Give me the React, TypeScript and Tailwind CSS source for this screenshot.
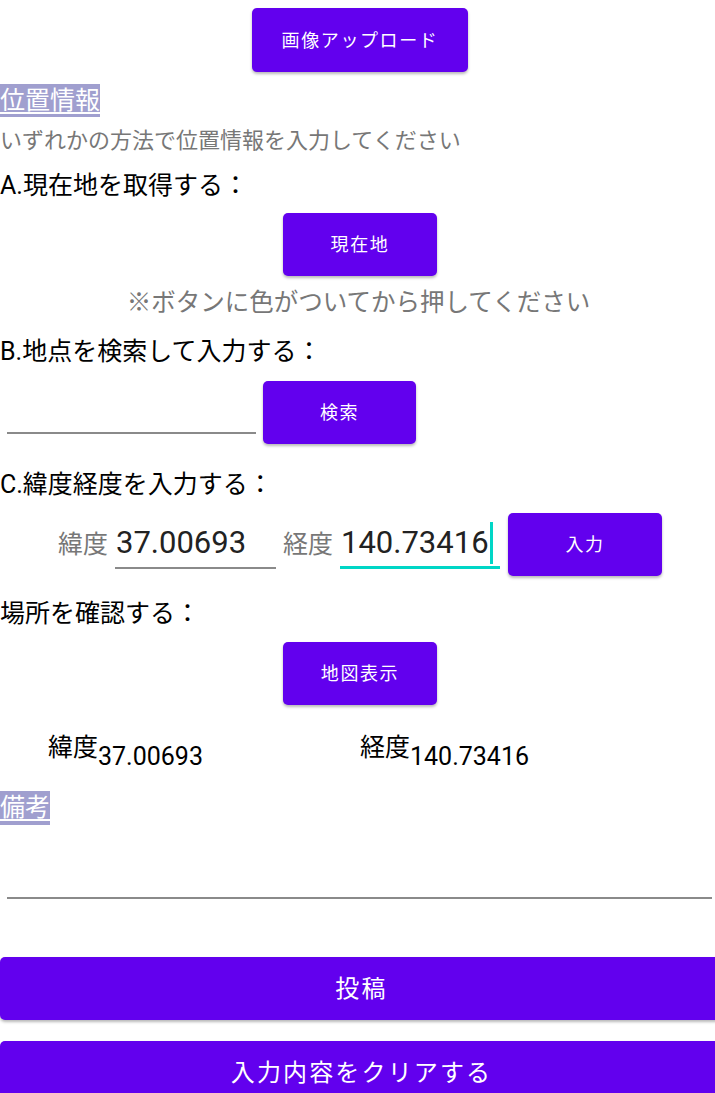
import React from "react";

const FONT = { fontFamily: "Roboto, 'Noto Sans CJK JP', sans-serif" };

function Btn({ label, className }: { label: string; className: string }) {
  return (
    <button
      type="button"
      className={
        "bg-[#6200ee] text-white rounded-[5px] shadow-[0_2px_3px_rgba(0,0,0,0.28)] tracking-[0.0892em] flex items-center justify-center shrink-0 " +
        className
      }
    >
      {label}
    </button>
  );
}

export default function App() {
  return (
    <div className="w-[715px] h-[1093px] overflow-hidden bg-white text-black" style={FONT}>
      <div className="flex pt-[8px] pl-[252px]">
        <Btn label="画像アップロード" className="w-[216px] h-[64px] text-[18px]" />
      </div>

      <div className="mt-[12px]">
        <span className="inline-block bg-[#a09fcf] text-white text-[25px] leading-[33px] h-[33px] underline underline-offset-[3px] decoration-[1.5px]">
          位置情報
        </span>
      </div>

      <p className="mt-[9px] text-[22px] leading-[30px] text-[#777777]">
        いずれかの方法で位置情報を入力してください
      </p>

      <p className="mt-[15px] text-[25px] leading-[30px]">A.現在地を取得する：</p>

      <div className="flex mt-[12px] pl-[283px]">
        <Btn label="現在地" className="w-[154px] h-[63px] text-[18px]" />
      </div>

      <p className="mt-[12px] text-[24.5px] leading-[30px] text-[#777777] text-center pl-[2px]">
        ※ボタンに色がついてから押してください
      </p>

      <p className="mt-[19px] text-[25px] leading-[30px]">B.地点を検索して入力する：</p>

      <div className="flex items-start mt-[14px] pl-[7px] gap-[7px]">
        <div className="w-[249px] h-[53px] border-b-[2px] border-[#8a8a8a]" />
        <Btn label="検索" className="w-[153px] h-[63px] text-[18px]" />
      </div>

      <p className="mt-[26px] text-[25px] leading-[30px]">C.緯度経度を入力する：</p>

      <div className="flex items-center mt-[13px] pl-[58px] h-[63px]">
        <span className="text-[25px] leading-[30px] text-[#777777] w-[57px]">緯度</span>
        <div className="w-[161px] h-[48px] border-b-[2px] border-[#8a8a8a] flex items-center text-[31px] text-[#222222] pl-[1px]">
          37.00693
        </div>
        <span className="text-[25px] leading-[30px] text-[#777777] ml-[7px] w-[57px]">経度</span>
        <div className="w-[160px] h-[48px] border-b-[3px] border-[#00d6c6] flex items-center text-[31px] text-[#222222] pl-[1px]">
          140.73416
          <span className="inline-block w-[3px] h-[42px] bg-[#00d6c6] ml-[1px]" />
        </div>
        <Btn label="入力" className="ml-[8px] w-[154px] h-[63px] text-[18px]" />
      </div>

      <p className="mt-[23px] text-[25px] leading-[30px]">場所を確認する：</p>

      <div className="flex mt-[13px] pl-[283px]">
        <Btn label="地図表示" className="w-[154px] h-[63px] text-[18px]" />
      </div>

      <div className="flex items-start mt-[28px] pl-[48px] text-[25px] leading-[30px]">
        <div className="flex items-start w-[312px]">
          <span>緯度</span>
          <span className="mt-[9px]">37.00693</span>
        </div>
        <div className="flex items-start">
          <span>経度</span>
          <span className="mt-[9px]">140.73416</span>
        </div>
      </div>

      <div className="mt-[19px]">
        <span className="inline-block bg-[#a09fcf] text-white text-[25px] leading-[34px] h-[34px] underline underline-offset-[3px] decoration-[1.5px]">
          備考
        </span>
      </div>

      <div className="ml-[7px] w-[705px] h-[74px] border-b-[2px] border-[#8a8a8a]" />

      <button
        type="button"
        className="mt-[58px] w-[723px] shrink-0 h-[63px] bg-[#6200ee] text-white text-[24px] tracking-[0.0892em] rounded-[5px] shadow-[0_2px_3px_rgba(0,0,0,0.28)] flex items-center justify-center"
      >
        投稿
      </button>

      <button
        type="button"
        className="mt-[21px] w-[723px] shrink-0 h-[63px] bg-[#6200ee] text-white text-[24px] tracking-[0.0892em] rounded-[5px] shadow-[0_2px_3px_rgba(0,0,0,0.28)] flex items-center justify-center"
      >
        入力内容をクリアする
      </button>
    </div>
  );
}
